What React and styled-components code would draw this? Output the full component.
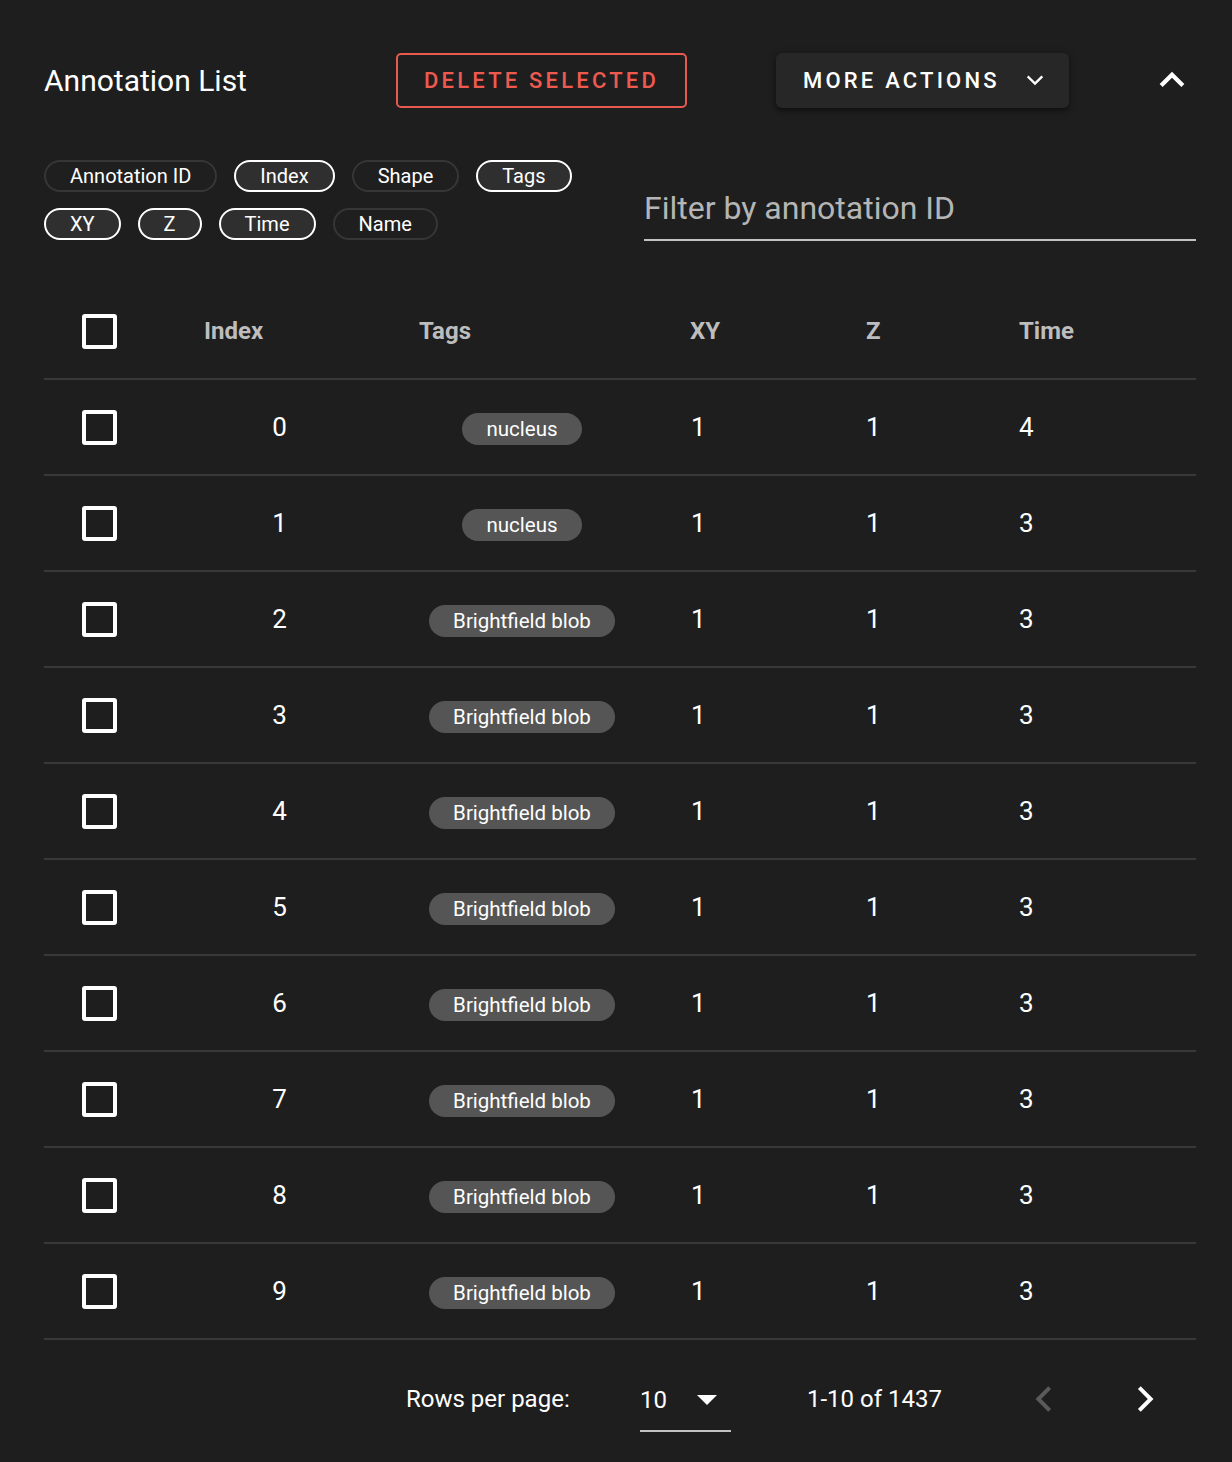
import React from "react";
import styled, { createGlobalStyle } from "styled-components";

const GlobalStyle = createGlobalStyle`
  html, body {
    margin: 0;
    padding: 0;
    background: #1e1e1e;
  }
  body {
    font-family: Roboto, "Liberation Sans", sans-serif;
    color: #ffffff;
  }
`;

const columnChips = [
  { label: "Annotation ID", on: false },
  { label: "Index", on: true },
  { label: "Shape", on: false },
  { label: "Tags", on: true },
  { label: "XY", on: true },
  { label: "Z", on: true },
  { label: "Time", on: true },
  { label: "Name", on: false },
];

const rows = [
  { index: 0, tag: "nucleus", xy: 1, z: 1, time: 4 },
  { index: 1, tag: "nucleus", xy: 1, z: 1, time: 3 },
  { index: 2, tag: "Brightfield blob", xy: 1, z: 1, time: 3 },
  { index: 3, tag: "Brightfield blob", xy: 1, z: 1, time: 3 },
  { index: 4, tag: "Brightfield blob", xy: 1, z: 1, time: 3 },
  { index: 5, tag: "Brightfield blob", xy: 1, z: 1, time: 3 },
  { index: 6, tag: "Brightfield blob", xy: 1, z: 1, time: 3 },
  { index: 7, tag: "Brightfield blob", xy: 1, z: 1, time: 3 },
  { index: 8, tag: "Brightfield blob", xy: 1, z: 1, time: 3 },
  { index: 9, tag: "Brightfield blob", xy: 1, z: 1, time: 3 },
];

const Chevron = ({ dir = "down", size = 24, color = "#fff", width = 3 }) => {
  const d = {
    down: "M5 9l7 7 7-7",
    up: "M5 15l7-7 7 7",
    left: "M15 5l-7 7 7 7",
    right: "M9 5l7 7-7 7",
  }[dir];
  return (
    <svg width={size} height={size} viewBox="0 0 24 24" fill="none">
      <path d={d} stroke={color} strokeWidth={width} strokeLinecap="square" />
    </svg>
  );
};

const App = () => {
  return (
    <Page>
      <GlobalStyle />
      <Toolbar>
        <Title>Annotation List</Title>
        <DeleteButton>DELETE SELECTED</DeleteButton>
        <MoreButton>
          MORE ACTIONS
          <Chevron dir="down" size={22} width={2.6} />
        </MoreButton>
        <CollapseButton>
          <Chevron dir="up" size={32} width={3.2} />
        </CollapseButton>
      </Toolbar>

      <FilterRow>
        <ChipGroup>
          {columnChips.map((c) => (
            <ColumnChip key={c.label} $on={c.on}>
              {c.label}
            </ColumnChip>
          ))}
        </ChipGroup>
        <FilterField>
          <FilterInput placeholder="Filter by annotation ID" />
        </FilterField>
      </FilterRow>

      <Table>
        <HeadRow>
          <CheckCell>
            <CheckBox />
          </CheckCell>
          <HeadCell $pl={21}>Index</HeadCell>
          <HeadCell $pl={21}>Tags</HeadCell>
          <HeadCell $pl={21}>XY</HeadCell>
          <HeadCell $pl={21}>Z</HeadCell>
          <HeadCell $pl={21}>Time</HeadCell>
        </HeadRow>
        {rows.map((r) => (
          <BodyRow key={r.index}>
            <CheckCell>
              <CheckBox />
            </CheckCell>
            <Cell $align="center" $pr={22}>
              {r.index}
            </Cell>
            <Cell $align="center" $pl={21} $pr={44}>
              <TagChip>{r.tag}</TagChip>
            </Cell>
            <Cell $pl={22}>{r.xy}</Cell>
            <Cell $pl={21}>{r.z}</Cell>
            <Cell $pl={21}>{r.time}</Cell>
          </BodyRow>
        ))}
      </Table>

      <Pagination>
        <PageLabel>Rows per page:</PageLabel>
        <PerPageSelect>
          <span>10</span>
          <Caret />
        </PerPageSelect>
        <PageRange>1-10 of 1437</PageRange>
        <PageNav>
          <NavButton>
            <Chevron dir="left" size={34} color="#5a5a5a" width={2.8} />
          </NavButton>
          <NavButton>
            <Chevron dir="right" size={34} width={2.8} />
          </NavButton>
        </PageNav>
      </Pagination>
    </Page>
  );
};

export default App;

const Page = styled.div`
  width: 1232px;
  min-height: 1462px;
  box-sizing: border-box;
  padding: 52px 36px 0 44px;
  background: #1e1e1e;
`;

const Toolbar = styled.div`
  display: flex;
  align-items: center;
  height: 56px;
`;

const Title = styled.h1`
  margin: 0;
  width: 352px;
  font-size: 30px;
  font-weight: 400;
  color: #ffffff;
`;

const DeleteButton = styled.button`
  box-sizing: border-box;
  width: 291px;
  height: 55px;
  border: 2px solid #e8594f;
  border-radius: 5px;
  background: transparent;
  color: #ee5a50;
  font-family: Roboto, sans-serif;
  font-size: 22px;
  font-weight: 500;
  letter-spacing: 3.2px;
  padding: 0;
`;

const MoreButton = styled.button`
  box-sizing: border-box;
  width: 293px;
  height: 55px;
  margin-left: 89px;
  border: none;
  border-radius: 6px;
  background: #272727;
  box-shadow: 0 3px 4px rgba(0, 0, 0, 0.35), 0 1px 8px rgba(0, 0, 0, 0.2);
  color: #ffffff;
  font-family: Roboto, sans-serif;
  font-size: 22px;
  font-weight: 500;
  letter-spacing: 3.2px;
  display: flex;
  align-items: center;
  padding: 0 22px 0 27px;
  gap: 20px;
  svg {
    margin-left: 4px;
  }
`;

const CollapseButton = styled.div`
  margin-left: auto;
  margin-right: 8px;
  display: flex;
  align-items: center;
  height: 56px;
`;

const FilterRow = styled.div`
  display: flex;
  align-items: flex-start;
  justify-content: space-between;
  height: 80px;
  margin-top: 52px;
`;

const ChipGroup = styled.div`
  display: flex;
  flex-wrap: wrap;
  width: 560px;
  gap: 16px 17px;
`;

const ColumnChip = styled.div`
  box-sizing: border-box;
  height: 32px;
  padding: 0 24px;
  border-radius: 16px;
  display: flex;
  align-items: center;
  font-size: 20px;
  color: #ffffff;
  border: 2px solid ${(p) => (p.$on ? "#ffffff" : "#363636")};
  background: ${(p) => (p.$on ? "#2f2f2f" : "#1f1f1f")};
`;

const FilterField = styled.div`
  width: 552px;
  margin-top: 29px;
  border-bottom: 2px solid #c2c2c2;
`;

const FilterInput = styled.input`
  width: 100%;
  box-sizing: border-box;
  background: transparent;
  border: none;
  outline: none;
  padding: 0 0 12px 0;
  font-family: Roboto, sans-serif;
  font-size: 32px;
  color: #ffffff;
  &::placeholder {
    color: #b5b5b5;
  }
`;

const Table = styled.div`
  margin-top: 44px;
`;

const gridColumns = "139px 215px 271px 176px 153px 198px";

const HeadRow = styled.div`
  display: grid;
  grid-template-columns: ${gridColumns};
  height: 94px;
  align-items: center;
  border-bottom: 2px solid #383838;
`;

const BodyRow = styled.div`
  display: grid;
  grid-template-columns: ${gridColumns};
  height: 94px;
  align-items: center;
  border-bottom: 2px solid #383838;
`;

const CheckCell = styled.div`
  padding-left: 38px;
  display: flex;
  align-items: center;
`;

const CheckBox = styled.div`
  box-sizing: border-box;
  width: 35px;
  height: 35px;
  border: 4px solid #ffffff;
  border-radius: 3px;
`;

const HeadCell = styled.div`
  padding-left: ${(p) => p.$pl || 0}px;
  font-size: 24px;
  font-weight: 700;
  color: #bdbdbd;
`;

const Cell = styled.div`
  display: flex;
  justify-content: ${(p) => (p.$align === "center" ? "center" : "flex-start")};
  padding-left: ${(p) => p.$pl || 0}px;
  padding-right: ${(p) => p.$pr || 0}px;
  font-size: 26px;
  color: #ffffff;
`;

const TagChip = styled.span`
  display: inline-flex;
  align-items: center;
  height: 32px;
  padding: 0 24px;
  border-radius: 16px;
  background: #555555;
  color: #ffffff;
  font-size: 20.5px;
  margin-top: 4px;
`;

const Pagination = styled.div`
  display: flex;
  align-items: center;
  height: 118px;
  padding-left: 362px;
  font-size: 24px;
  color: #ffffff;
`;

const PageLabel = styled.span`
  width: 234px;
`;

const PerPageSelect = styled.div`
  box-sizing: border-box;
  width: 91px;
  height: 62px;
  display: flex;
  align-items: center;
  justify-content: space-between;
  border-bottom: 2px solid #c2c2c2;
  padding: 0 14px 0 0;
  align-self: flex-start;
  margin-top: 30px;
`;

const Caret = styled.span`
  width: 0;
  height: 0;
  border-left: 10px solid transparent;
  border-right: 10px solid transparent;
  border-top: 10px solid #ffffff;
`;

const PageRange = styled.span`
  margin-left: 76px;
`;

const PageNav = styled.div`
  display: flex;
  align-items: center;
  gap: 67px;
  margin-left: 85px;
`;

const NavButton = styled.div`
  display: flex;
  align-items: center;
`;
